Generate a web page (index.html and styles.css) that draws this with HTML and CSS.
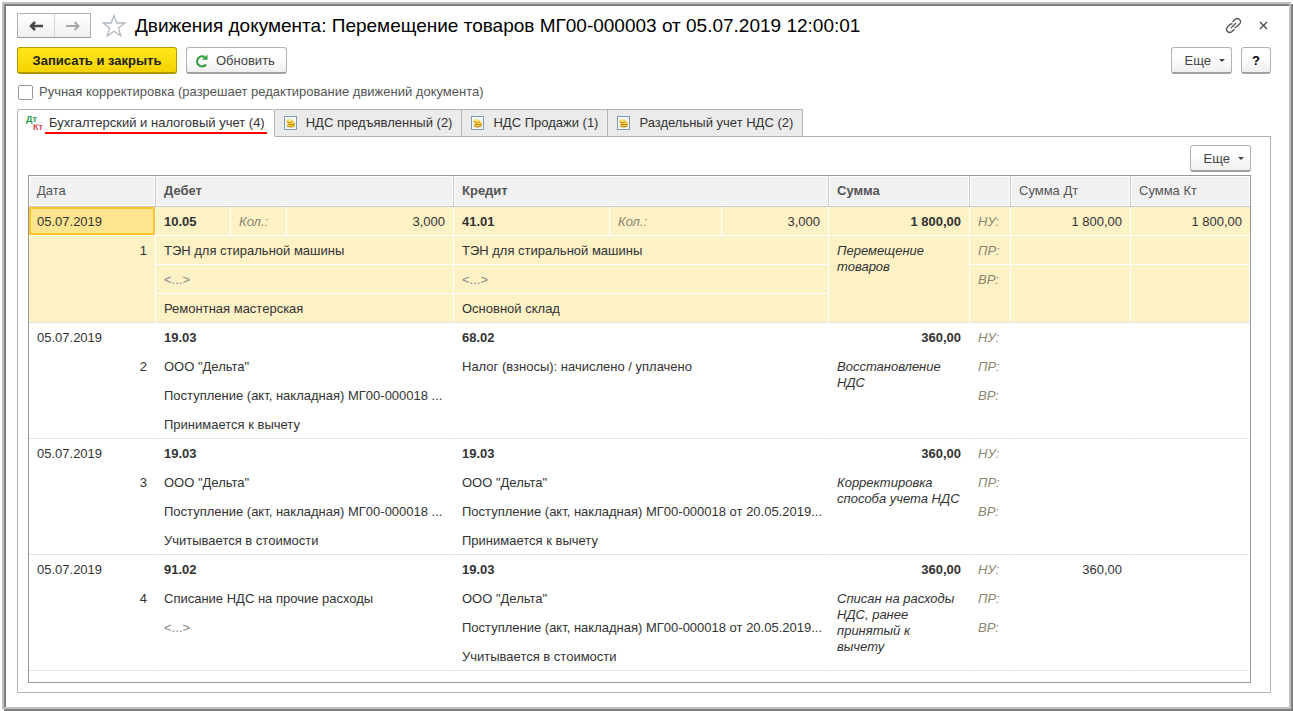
FILE: index.html
```html
<!DOCTYPE html>
<html lang="ru">
<head>
<meta charset="utf-8">
<title>Движения документа</title>
<link rel="stylesheet" href="styles.css">
</head>
<body>
<svg class="defs" width="0" height="0" aria-hidden="true">
  <symbol id="register" viewBox="0 0 14 14">
    <rect x="0.5" y="0.5" width="12" height="13" fill="#fff" stroke="#7d9bb5"/>
    <rect x="1.5" y="1.5" width="10" height="11" fill="#eef4f9"/>
    <ellipse cx="6.8" cy="9.8" rx="3.9" ry="1.7" fill="#b87a10"/>
    <ellipse cx="6.8" cy="9.1" rx="3.9" ry="1.5" fill="#f3c73a"/>
    <ellipse cx="7.4" cy="7.5" rx="3.6" ry="1.5" fill="#b87a10"/>
    <ellipse cx="7.400" cy="6.800" rx="3.600" ry="1.400" fill="#f9d84c"/>
    <ellipse cx="5.600" cy="5.300" rx="3.300" ry="1.500" fill="#c98a18"/>
    <ellipse cx="5.600" cy="4.600" rx="3.300" ry="1.300" fill="#fce36a"/>
  </symbol>
</svg>
<main class="window">
  <header class="titlebar">
    <div class="history">
      <button class="history-btn" type="button" aria-label="Назад"><svg width="16" height="12" viewBox="0 0 16 12"><path d="M15 6H4M7 2 3 6 7 10" fill="none" stroke="#484848" stroke-width="2.500"/></svg></button>
      <button class="history-btn" type="button" aria-label="Вперед"><svg width="16" height="12" viewBox="0 0 16 12"><path d="M1 6H13M9.500 2 13.500 6 9.500 10" fill="none" stroke="#a8a8a8" stroke-width="2"/></svg></button>
    </div>
    <button class="plain star" type="button" aria-label="В избранное"><svg width="24" height="24" viewBox="0 0 24 24"><path d="M12 1.500 14.800 9H23L16.400 14 18.800 22 12 17.200 5.200 22 7.600 14 1 9H9.200Z" fill="none" stroke="#b0b8c1" stroke-width="1.300"/></svg></button>
    <h1 class="title">Движения документа: Перемещение товаров МГ00-000003 от 05.07.2019 12:00:01</h1>
    <button class="plain" type="button" aria-label="Получить ссылку"><svg width="17" height="17" viewBox="0 0 17 17" fill="none" stroke="#555" stroke-width="1.300"><path d="M7.500 5 10 2.500Q12.300 0.500 14.500 2.500T14.500 7L12 9.500Q10.800 10.400 9.500 10.200"/><path d="M9.500 12 7 14.500Q4.700 16.500 2.500 14.500T2.500 10L5 7.500Q6.200 6.600 7.500 6.800M6 11 11 6"/></svg></button>
    <button class="plain" type="button" aria-label="Закрыть"><svg width="9" height="9" viewBox="0 0 9 9"><path d="M1 1 8 8M8 1 1 8" stroke="#444" stroke-width="1.200"/></svg></button>
  </header>

  <div class="toolbar">
    <button class="btn btn-primary" type="button">Записать и закрыть</button>
    <button class="btn btn-icon" type="button"><svg width="13" height="14" viewBox="0 0 13 14"><path d="M11 10.500A5 5 0 1 1 9.500 3" fill="none" stroke="#2f9e41" stroke-width="2.200"/><path d="M7 5.800H12.500V0.500Z" fill="#2f9e41"/></svg>Обновить</button>
    <span class="spacer"></span>
    <button class="btn btn-more" type="button">Еще<span class="caret"></span></button>
    <button class="btn btn-help" type="button">?</button>
  </div>

  <label class="manual"><input class="check" type="checkbox">Ручная корректировка (разрешает редактирование движений документа)</label>

  <div class="tabs" role="tablist">
    <button class="tab tab-active" type="button" role="tab" aria-selected="true"><span class="dtkt" aria-hidden="true"><span class="dt">Дт</span><span class="kt">Кт</span></span><span class="marked">Бухгалтерский и налоговый учет (4)</span></button>
    <button class="tab" type="button" role="tab"><svg width="14" height="14"><use href="#register"/></svg>НДС предъявленный (2)</button>
    <button class="tab" type="button" role="tab"><svg width="14" height="14"><use href="#register"/></svg>НДС Продажи (1)</button>
    <button class="tab" type="button" role="tab"><svg width="14" height="14"><use href="#register"/></svg>Раздельный учет НДС (2)</button>
  </div>

  <section class="pane" role="tabpanel">
    <div class="pane-bar"><button class="btn btn-more" type="button">Еще<span class="caret"></span></button></div>
    <div class="grid">
      <table class="entries">
        <colgroup>
          <col class="c-date"><col class="c-dacc"><col class="c-dlab"><col class="c-dqty"><col class="c-cacc"><col class="c-clab"><col class="c-cqty"><col class="c-sum"><col class="c-kind"><col class="c-dt"><col class="c-kt">
        </colgroup>
        <thead>
          <tr><th>Дата</th><th class="b" colspan="3">Дебет</th><th class="b" colspan="3">Кредит</th><th class="b">Сумма</th><th></th><th>Сумма Дт</th><th>Сумма Кт</th></tr>
        </thead>
        <tbody class="selected">
          <tr><td class="current">05.07.2019</td><td class="b">10.05</td><td class="hint">Кол.:</td><td class="num">3,000</td><td class="b">41.01</td><td class="hint">Кол.:</td><td class="num">3,000</td><td class="num b">1 800,00</td><td class="hint">НУ:</td><td class="num">1 800,00</td><td class="num">1 800,00</td></tr>
          <tr><td class="num" rowspan="3">1</td><td colspan="3">ТЭН для стиральной машины</td><td colspan="3">ТЭН для стиральной машины</td><td class="note" rowspan="3">Перемещение товаров</td><td class="hint">ПР:</td><td></td><td></td></tr>
          <tr><td class="empty" colspan="3">&lt;...&gt;</td><td class="empty" colspan="3">&lt;...&gt;</td><td class="hint" rowspan="2">ВР:</td><td rowspan="2"></td><td rowspan="2"></td></tr>
          <tr><td colspan="3">Ремонтная мастерская</td><td colspan="3">Основной склад</td></tr>
        </tbody>
        <tbody>
          <tr><td>05.07.2019</td><td class="b" colspan="3">19.03</td><td class="b" colspan="3">68.02</td><td class="num b">360,00</td><td class="hint">НУ:</td><td></td><td></td></tr>
          <tr><td class="num" rowspan="3">2</td><td colspan="3">ООО "Дельта"</td><td colspan="3">Налог (взносы): начислено / уплачено</td><td class="note" rowspan="3">Восстановление НДС</td><td class="hint">ПР:</td><td></td><td></td></tr>
          <tr><td class="long" colspan="3">Поступление (акт, накладная) МГ00-000018 ...</td><td colspan="3"></td><td class="hint" rowspan="2">ВР:</td><td rowspan="2"></td><td rowspan="2"></td></tr>
          <tr><td colspan="3">Принимается к вычету</td><td colspan="3"></td></tr>
        </tbody>
        <tbody>
          <tr><td>05.07.2019</td><td class="b" colspan="3">19.03</td><td class="b" colspan="3">19.03</td><td class="num b">360,00</td><td class="hint">НУ:</td><td></td><td></td></tr>
          <tr><td class="num" rowspan="3">3</td><td colspan="3">ООО "Дельта"</td><td colspan="3">ООО "Дельта"</td><td class="note" rowspan="3">Корректировка способа учета НДС</td><td class="hint">ПР:</td><td></td><td></td></tr>
          <tr><td class="long" colspan="3">Поступление (акт, накладная) МГ00-000018 ...</td><td class="long" colspan="3">Поступление (акт, накладная) МГ00-000018 от 20.05.2019...</td><td class="hint" rowspan="2">ВР:</td><td rowspan="2"></td><td rowspan="2"></td></tr>
          <tr><td colspan="3">Учитывается в стоимости</td><td colspan="3">Принимается к вычету</td></tr>
        </tbody>
        <tbody>
          <tr><td>05.07.2019</td><td class="b" colspan="3">91.02</td><td class="b" colspan="3">19.03</td><td class="num b">360,00</td><td class="hint">НУ:</td><td class="num">360,00</td><td></td></tr>
          <tr><td class="num" rowspan="3">4</td><td colspan="3">Списание НДС на прочие расходы</td><td colspan="3">ООО "Дельта"</td><td class="note" rowspan="3">Списан на расходы НДС, ранее принятый к<br>вычету</td><td class="hint">ПР:</td><td></td><td></td></tr>
          <tr><td class="empty" colspan="3">&lt;...&gt;</td><td class="long" colspan="3">Поступление (акт, накладная) МГ00-000018 от 20.05.2019...</td><td class="hint" rowspan="2">ВР:</td><td rowspan="2"></td><td rowspan="2"></td></tr>
          <tr><td colspan="3"></td><td colspan="3">Учитывается в стоимости</td></tr>
        </tbody>
      </table>
    </div>
  </section>
</main>
</body>
</html>
```
FILE: styles.css
```css
* { box-sizing: border-box; }

body {
  margin: 0;
  padding: 2px;
  background: #fff;
  color: #333;
  font: 13px/16px "Liberation Sans", Arial, sans-serif;
}

button, input { font: inherit; color: inherit; margin: 0; }
.defs { position: absolute; }

.window {
  display: flex;
  flex-direction: column;
  min-height: calc(100vh - 4px);
  padding: 9px 18px 14px 13px;
  border: 2px solid #c0c0c0;
  box-shadow: 2px 2px 0 #808080, inset 2px 2px 0 #808080;
}

/* Title */
.titlebar { display: flex; align-items: center; height: 25px; }
.history {
  display: flex;
  border: 1px solid #b0b0b0;
  border-bottom-color: #999;
}
.history-btn {
  display: flex;
  align-items: center;
  justify-content: center;
  width: 36px;
  height: 23px;
  padding: 0;
  border: 0;
  background: linear-gradient(#fff, #f0f0f0);
}
.history-btn + .history-btn { border-left: 1px solid #d4d4d4; }
.plain {
  display: flex;
  padding: 0;
  border: 0;
  background: none;
}
.plain + .plain { margin: 0 3px 0 17px; }
.star { margin-left: 11px; }
.title {
  flex: 1;
  margin: 0 0 0 9px;
  color: #000;
  font-size: 19px;
  line-height: 24px;
  font-weight: 400;
  white-space: nowrap;
}

/* Commands */
.toolbar { display: flex; gap: 9px; margin-top: 9px; }
.spacer { flex: 1; }
.btn {
  display: flex;
  align-items: center;
  justify-content: center;
  height: 27px;
  padding: 1px 13px 0;
  border: 1px solid #b3b3b3;
  border-bottom: 2px solid #a0a0a0;
  border-radius: 3px;
  background: linear-gradient(#fff 40%, #efefef);
  color: #444;
}
.btn-primary {
  min-width: 160px;
  border-color: #b09800;
  background: linear-gradient(#ffe71a, #f5d200);
  color: #222;
  font-weight: 700;
}
.btn-icon { gap: 8px; padding-left: 8px; padding-right: 11px; }
.btn-more { gap: 8px; padding-right: 6px; }
.btn-help { width: 30px; padding-left: 0; padding-right: 0; color: #000; font-weight: 700; }
.caret {
  border: 3px solid transparent;
  border-top-color: #444;
  border-bottom-width: 0;
}

.manual {
  display: flex;
  align-items: center;
  align-self: flex-start;
  gap: 6px;
  margin: 10px 0 9px 1px;
  color: #555;
}
.check {
  appearance: none;
  width: 15px;
  height: 15px;
  border: 1px solid #999;
  border-radius: 2px;
  background: #fff;
}

/* Tabs */
.tabs { display: flex; height: 28px; margin-bottom: -1px; z-index: 1; }
.tab {
  display: flex;
  align-items: center;
  gap: 8px;
  padding: 0 9px;
  border: 1px solid #b3b3b3;
  border-left: 0;
  background: #ebebeb;
  white-space: nowrap;
}
.tab-active {
  gap: 2px;
  padding: 0 7px 0 8px;
  border-left: 1px solid #b3b3b3;
  border-bottom-color: #fff;
  border-radius: 3px 3px 0 0;
  background: #fff;
}
.dtkt { display: grid; width: 17px; font-size: 9px; line-height: 8px; font-weight: 700; }
.dt { justify-self: start; color: #1a9a4b; }
.kt { justify-self: end; color: #dc4a4a; }
.marked { padding: 3px 2px 1px 4px; border-bottom: 2px solid #f00; }

/* Entries */
.pane {
  display: flex;
  flex: 1;
  flex-direction: column;
  padding: 8px 19px 9px 10px;
  border: 1px solid #b3b3b3;
}
.pane-bar { display: flex; justify-content: flex-end; margin-bottom: 3px; }
.grid { flex: 1; border: 1px solid #999; }
.entries {
  width: 100%;
  table-layout: fixed;
  border-collapse: separate;
  border-spacing: 0;
}
.c-date { width: 127px; }
.c-dacc { width: 75px; }
.c-dlab { width: 56px; }
.c-dqty { width: 167px; }
.c-cacc { width: 156px; }
.c-clab { width: 112px; }
.c-cqty { width: 107px; }
.c-sum { width: 141px; }
.c-kind { width: 41px; }
.c-dt { width: 120px; }
.c-kt { width: 119px; }

.entries th {
  height: 31px;
  padding: 0 8px;
  border-right: 1px solid #c8c8c8;
  border-bottom: 1px solid #c8c8c8;
  background: #f1f1f1;
  box-shadow: inset 0 0 0 1px #fff;
  color: #555;
  font-weight: 400;
  text-align: left;
}
.entries th:last-child { border-right: 0; }
.entries td {
  height: 29px;
  padding: 7px 8px 5px;
  border-right: 1px solid #fff;
  border-bottom: 1px solid #fff;
  vertical-align: top;
  white-space: nowrap;
}
.entries tr:first-child td:last-child { border-right: 0; }
.entries tr:last-child td,
.entries tr:nth-child(2) td[rowspan="3"],
.entries tr:nth-child(3) td[rowspan="2"] { border-bottom-color: #e2e2e2; }
.entries .b { font-weight: 700; }
.entries td.num { text-align: right; }
.entries td.hint { color: #8a8670; font-style: italic; }
.entries td.empty { color: #888; }
.entries td.long { padding-right: 0; }
.entries td.note { font-style: italic; white-space: normal; }
.selected td { background: #fdf1c6; }
.selected td.current { background: #fde48e; box-shadow: inset 0 0 0 2px #f9c623; }
```
